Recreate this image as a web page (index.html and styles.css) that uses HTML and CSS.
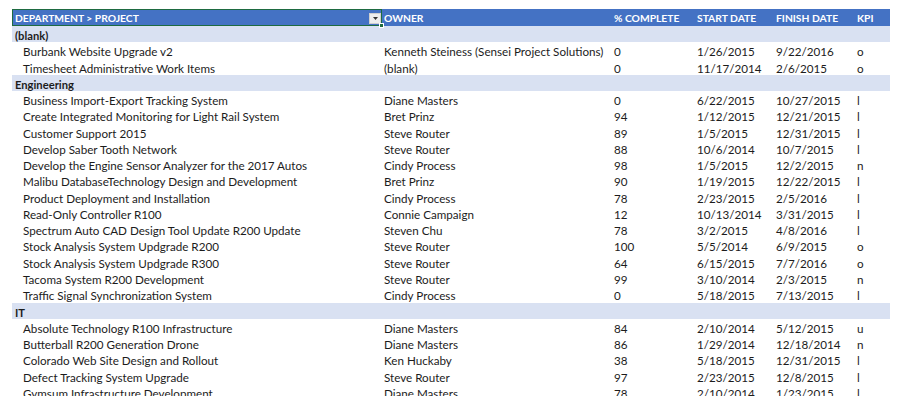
FILE: index.html
```html
<!DOCTYPE html>
<html>
<head>
<meta charset="utf-8">
<link rel="stylesheet" href="styles.css">
</head>
<body>
<div class="sheet">
  <div class="row head">
    <div class="c c1 sel"><span>DEPARTMENT &gt; PROJECT</span><span class="dd"><svg width="5" height="3" viewBox="0 0 5 3"><path d="M0 0H5L2.5 3Z" fill="#333"/></svg></span><span class="handle"></span></div>
    <div class="c">OWNER</div>
    <div class="c">% COMPLETE</div>
    <div class="c">START DATE</div>
    <div class="c">FINISH DATE</div>
    <div class="c">KPI</div>
  </div>
  <div class="row grp"><div class="c c1">(blank)</div><div class="c"></div><div class="c"></div><div class="c"></div><div class="c"></div><div class="c"></div></div>
  <div class="row"><div class="c c1 it">Burbank Website Upgrade v2</div><div class="c">Kenneth Steiness (Sensei Project Solutions)</div><div class="c">0</div><div class="c">1/26/2015</div><div class="c">9/22/2016</div><div class="c">o</div></div>
  <div class="row"><div class="c c1 it">Timesheet Administrative Work Items</div><div class="c">(blank)</div><div class="c">0</div><div class="c">11/17/2014</div><div class="c">2/6/2015</div><div class="c">o</div></div>
  <div class="row grp"><div class="c c1">Engineering</div><div class="c"></div><div class="c"></div><div class="c"></div><div class="c"></div><div class="c"></div></div>
  <div class="row"><div class="c c1 it">Business Import-Export Tracking System</div><div class="c">Diane Masters</div><div class="c">0</div><div class="c">6/22/2015</div><div class="c">10/27/2015</div><div class="c">l</div></div>
  <div class="row"><div class="c c1 it">Create Integrated Monitoring for Light Rail System</div><div class="c">Bret Prinz</div><div class="c">94</div><div class="c">1/12/2015</div><div class="c">12/21/2015</div><div class="c">l</div></div>
  <div class="row"><div class="c c1 it">Customer Support 2015</div><div class="c">Steve Router</div><div class="c">89</div><div class="c">1/5/2015</div><div class="c">12/31/2015</div><div class="c">l</div></div>
  <div class="row"><div class="c c1 it">Develop Saber Tooth Network</div><div class="c">Steve Router</div><div class="c">88</div><div class="c">10/6/2014</div><div class="c">10/7/2015</div><div class="c">l</div></div>
  <div class="row"><div class="c c1 it">Develop the Engine Sensor Analyzer for the 2017 Autos</div><div class="c">Cindy Process</div><div class="c">98</div><div class="c">1/5/2015</div><div class="c">12/2/2015</div><div class="c">n</div></div>
  <div class="row"><div class="c c1 it">Malibu DatabaseTechnology Design and Development</div><div class="c">Bret Prinz</div><div class="c">90</div><div class="c">1/19/2015</div><div class="c">12/22/2015</div><div class="c">l</div></div>
  <div class="row"><div class="c c1 it">Product Deployment and Installation</div><div class="c">Cindy Process</div><div class="c">78</div><div class="c">2/23/2015</div><div class="c">2/5/2016</div><div class="c">l</div></div>
  <div class="row"><div class="c c1 it">Read-Only Controller R100</div><div class="c">Connie Campaign</div><div class="c">12</div><div class="c">10/13/2014</div><div class="c">3/31/2015</div><div class="c">l</div></div>
  <div class="row"><div class="c c1 it">Spectrum Auto CAD Design Tool Update R200 Update</div><div class="c">Steven Chu</div><div class="c">78</div><div class="c">3/2/2015</div><div class="c">4/8/2016</div><div class="c">l</div></div>
  <div class="row"><div class="c c1 it">Stock Analysis System Updgrade R200</div><div class="c">Steve Router</div><div class="c">100</div><div class="c">5/5/2014</div><div class="c">6/9/2015</div><div class="c">o</div></div>
  <div class="row"><div class="c c1 it">Stock Analysis System Updgrade R300</div><div class="c">Steve Router</div><div class="c">64</div><div class="c">6/15/2015</div><div class="c">7/7/2016</div><div class="c">o</div></div>
  <div class="row"><div class="c c1 it">Tacoma System R200 Development</div><div class="c">Steve Router</div><div class="c">99</div><div class="c">3/10/2014</div><div class="c">2/3/2015</div><div class="c">n</div></div>
  <div class="row"><div class="c c1 it">Traffic Signal Synchronization System</div><div class="c">Cindy Process</div><div class="c">0</div><div class="c">5/18/2015</div><div class="c">7/13/2015</div><div class="c">l</div></div>
  <div class="row grp"><div class="c c1">IT</div><div class="c"></div><div class="c"></div><div class="c"></div><div class="c"></div><div class="c"></div></div>
  <div class="row"><div class="c c1 it">Absolute Technology R100 Infrastructure</div><div class="c">Diane Masters</div><div class="c">84</div><div class="c">2/10/2014</div><div class="c">5/12/2015</div><div class="c">u</div></div>
  <div class="row"><div class="c c1 it">Butterball R200 Generation Drone</div><div class="c">Diane Masters</div><div class="c">86</div><div class="c">1/29/2014</div><div class="c">12/18/2014</div><div class="c">n</div></div>
  <div class="row"><div class="c c1 it">Colorado Web Site Design and Rollout</div><div class="c">Ken Huckaby</div><div class="c">38</div><div class="c">5/18/2015</div><div class="c">12/31/2015</div><div class="c">l</div></div>
  <div class="row"><div class="c c1 it">Defect Tracking System Upgrade</div><div class="c">Steve Router</div><div class="c">97</div><div class="c">2/23/2015</div><div class="c">12/8/2015</div><div class="c">l</div></div>
  <div class="row"><div class="c c1 it">Gymsum Infrastructure Development</div><div class="c">Diane Masters</div><div class="c">78</div><div class="c">2/10/2014</div><div class="c">1/23/2015</div><div class="c">l</div></div>
</div>
</body>
</html>
```
FILE: styles.css
```css
html, body {
  margin: 0;
  padding: 0;
  background: #ffffff;
  overflow: hidden;
}
.sheet {
  padding: 9px 0 0 12px;
  width: 878px;
  font-family: Lato, "Liberation Sans", sans-serif;
  font-size: 11.65px;
  color: #1c1c1c;
}
.row {
  display: grid;
  grid-template-columns: 370px 230px 83px 79px 81px 35px;
  height: 16.28px;
  align-items: start;
  white-space: nowrap;
}
.c {
  padding-left: 2px;
  padding-top: 3px;
  line-height: 13px;
  overflow: hidden;
}
.c1.it {
  padding-left: 11px;
}
.head {
  height: 17px;
  background: #4472c4;
  color: #ffffff;
  font-weight: bold;
  font-size: 10.3px;
}
.head .c {
  padding-left: 2px;
  padding-top: 3px;
  line-height: 13px;
}
.head .sel {
  position: relative;
  height: 17px;
  box-sizing: border-box;
  border: 1px solid #1e6b41;
  padding-left: 2px;
  padding-top: 2px;
  overflow: visible;
  display: flex;
  align-items: flex-start;
}
.dd {
  margin-left: auto;
  margin-right: 0;
  margin-top: 1px;
  width: 12px;
  height: 11px;
  background: #eeeeee;
  border: 1px solid #cfcfcf;
  box-sizing: border-box;
  display: flex;
  align-items: center;
  justify-content: center;
}
.handle {
  position: absolute;
  right: -3px;
  bottom: -3px;
  width: 5px;
  height: 5px;
  background: #1e6b41;
  border: 1px solid #ffffff;
  box-sizing: border-box;
}
.grp {
  background: #d9e1f2;
  font-weight: bold;
  font-size: 11.2px;
}
.grp .c {
  padding-left: 3px;
}
```
